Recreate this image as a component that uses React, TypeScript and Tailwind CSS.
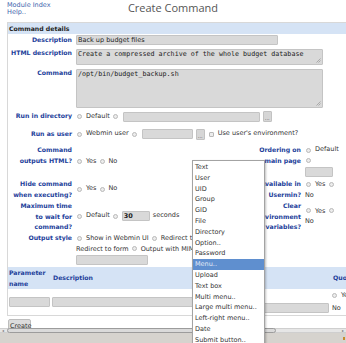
import React from 'react';

function Radio() {
  return <span className="inline-block w-[5px] h-[5px] shrink-0 rounded-full border border-[#b9b9b9] bg-[#ececec] ml-[1px] mr-[4px]" />;
}

function Box({ w, text, bold }: { w: string; text?: string; bold?: boolean }) {
  return (
    <div className={`${w} h-[10px] shrink-0 bg-[#d9d9d9] border border-[#c4c4c4] rounded-[1px] pl-[1px] leading-[8px] text-[#222] ${bold ? 'font-bold' : ''}`}>
      {text}
    </div>
  );
}

function Dots() {
  return (
    <div className="w-[9px] h-[11px] shrink-0 ml-[3px] bg-[#d6d6d6] border border-[#c2c2c2] rounded-[1px] text-[5px] leading-[12px] text-center text-[#444]">
      ...
    </div>
  );
}

function Grip() {
  return (
    <svg className="absolute right-[1px] bottom-[1px]" width="5" height="5" viewBox="0 0 5 5">
      <path d="M4.5 0.5 L0.5 4.5 M4.5 2.5 L2.5 4.5" stroke="#8a8a8a" strokeWidth="0.6" />
    </svg>
  );
}

const label = 'w-[66px] shrink-0 pr-[2px] text-right font-bold text-[6.2px] whitespace-nowrap text-[#22409a] leading-[10.5px]';
const rlabel = 'w-[55px] shrink-0 pr-[4px] text-right font-bold text-[6.2px] whitespace-nowrap text-[#22409a] leading-[10.5px]';

const types = [
  'Text', 'User', 'UID', 'Group', 'GID', 'File', 'Directory', 'Option..', 'Password',
  'Menu..', 'Upload', 'Text box', 'Multi menu..', 'Large multi menu..', 'Left-right menu..',
  'Date', 'Submit button..',
];

export default function App() {
  return (
    <div className="relative w-[346px] h-[343px] overflow-hidden bg-white font-['DejaVu_Sans',sans-serif] text-[6.5px] text-[#333]">
      <div className="h-[328px] overflow-hidden">
        <div className="grid grid-cols-[1fr_auto_1fr] h-[22px]">
          <div className="pl-[7px] pt-[1.5px] leading-[7px] text-[#4063ad]">
            <div>Module Index</div>
            <div>Help..</div>
          </div>
          <div className="font-['Open_Sans',sans-serif] text-[11px] leading-[14px] pt-[1px] text-[#555]">Create Command</div>
          <div />
        </div>

        <div className="ml-[7px] w-[430px] border border-[#d8d8d8]">
          <div className="h-[11px] bg-[#d5e3f5] pl-[1px] font-bold text-[6.2px] leading-[11px] text-[#222]">Command details</div>

          <div className="flex h-[12px]">
            <div className={`${label} pt-[1px]`}>Description</div>
            <div className="pl-[2px] mt-[1px]">
              <Box w="w-[202px]" text="Back up budget files" />
            </div>
          </div>

          <div className="flex h-[21px]">
            <div className={`${label} pt-[2px]`}>HTML description</div>
            <div className="pl-[2px] mt-[3px]">
              <div className="relative w-[247px] h-[16px] bg-[#d9d9d9] border border-[#c4c4c4] rounded-[1px] pl-[1px] font-['DejaVu_Sans_Mono',monospace] text-[6.7px] leading-[8px] text-[#222]">
                Create a compressed archive of the whole budget database
                <Grip />
              </div>
            </div>
          </div>

          <div className="flex h-[43px]">
            <div className={`${label} pt-[1px]`}>Command</div>
            <div className="pl-[2px] mt-[2px]">
              <div className="relative w-[247px] h-[39px] bg-[#d9d9d9] border border-[#c4c4c4] rounded-[1px] pl-[1px] font-['DejaVu_Sans_Mono',monospace] text-[6.7px] leading-[8px] text-[#222]">
                /opt/bin/budget_backup.sh
                <Grip />
              </div>
            </div>
          </div>

          <div className="flex items-center h-[13px]">
            <div className={label}>Run in directory</div>
            <div className="flex items-center pl-[2px]">
              <Radio />
              <span className="mr-[2px]">Default</span>
              <Radio />
              <div className="ml-[1px]"><Box w="w-[137px]" /></div>
              <Dots />
            </div>
          </div>

          <div className="flex items-center h-[22px]">
            <div className={label}>Run as user</div>
            <div className="flex items-center pl-[2px]">
              <Radio />
              <span className="mr-[2px]">Webmin user</span>
              <Radio />
              <div className="ml-[1px]"><Box w="w-[51px]" /></div>
              <Dots />
              <span className="inline-block w-[5px] h-[5px] ml-[4px] mr-[4px] border border-[#b9b9b9] bg-[#ececec] rounded-[1px]" />
              <span>Use user's environment?</span>
            </div>
          </div>

          <div className="flex h-[33px]">
            <div className={label}>Command<br />outputs HTML?</div>
            <div className="w-[176px] flex items-center pl-[2px]">
              <Radio />
              <span className="mr-[2px]">Yes</span>
              <Radio />
              <span>No</span>
            </div>
            <div className={rlabel}>Ordering on<br />main page</div>
            <div className="flex flex-col">
              <div className="flex items-center h-[10.5px]"><Radio /><span>Default</span></div>
              <div className="flex items-center h-[10.5px]"><Radio /></div>
              <div className="mt-[0.5px]"><Box w="w-[28px]" /></div>
            </div>
          </div>

          <div className="flex h-[22px]">
            <div className={`${label} pt-[1px]`}>Hide command<br />when executing?</div>
            <div className="w-[176px] flex items-center pl-[2px]">
              <Radio />
              <span className="mr-[2px]">Yes</span>
              <Radio />
              <span>No</span>
            </div>
            <div className={`${rlabel} pt-[1px]`}>Available in<br />Usermin?</div>
            <div className="flex flex-col pt-[1px] leading-[10.5px]">
              <div className="flex items-center h-[10.5px]"><Radio /><span className="mr-[2px]">Yes</span><Radio /></div>
              <div>No</div>
            </div>
          </div>

          <div className="flex h-[32px]">
            <div className={`${label} pt-[1px]`}>Maximum time<br />to wait for<br />command?</div>
            <div className="w-[176px] flex items-center pl-[2px]">
              <Radio />
              <span className="mr-[2px]">Default</span>
              <Radio />
              <Box w="w-[28px]" text="30" bold />
              <span className="ml-[3px]">seconds</span>
            </div>
            <div className={`${rlabel} pt-[1px]`}>Clear<br />environment<br />variables?</div>
            <div className="flex flex-col justify-center leading-[10.5px]">
              <div className="flex items-center h-[10.5px]"><Radio /><span className="mr-[2px]">Yes</span><Radio /></div>
              <div>No</div>
            </div>
          </div>

          <div className="flex h-[35px]">
            <div className={`${label} pt-[1px]`}>Output style</div>
            <div className="flex flex-col pl-[2px] pt-[1px] leading-[10.5px]">
              <div className="flex items-center h-[10.5px]">
                <Radio />
                <span className="mr-[2px]">Show in Webmin UI</span>
                <Radio />
                <span className="mr-[2px]">Redirect to page</span>
                <Radio />
              </div>
              <div className="flex items-center h-[10.5px]">
                <span className="mr-[2px]">Redirect to form</span>
                <Radio />
                <span>Output with MIME type</span>
              </div>
              <div className="mt-[1px]"><Box w="w-[72px]" /></div>
            </div>
          </div>

          <div className="flex h-[22px] bg-[#d5e3f5] font-bold text-[6.2px] text-[#22409a] leading-[10.5px]">
            <div className="w-[44px] pl-[1px] pt-[1px]">Parameter<br />name</div>
            <div className="w-[148px] pl-[1px] flex items-center">Description</div>
            <div className="w-[131px] flex items-center">Type</div>
            <div className="pl-[2px] flex items-center whitespace-nowrap">Quote parameter?</div>
          </div>

          <div className="flex h-[26px]">
            <div className="w-[44px] pl-[1px] flex items-center"><Box w="w-[41px]" /></div>
            <div className="w-[148px] flex items-center"><Box w="w-[146px]" /></div>
            <div className="w-[131px] flex flex-col justify-end pb-[2px]"><Box w="w-[129px]" /></div>
            <div className="flex flex-col pt-[1px] leading-[10.5px]">
              <div className="flex items-center h-[10.5px]"><Radio /><span>Yes</span></div>
              <div className="mt-[2.5px] pl-[1px]">No</div>
            </div>
          </div>
        </div>

        <div className="ml-[8px] mt-[3px] w-[23px] h-[14px] bg-[#dcdcdc] border border-[#bdbdbd] rounded-t-[2px] pl-[1px] leading-[12px] text-[#333]">
          Create
        </div>
      </div>

      <div className="relative h-[5px] bg-[#e6e6e6] border-y border-[#cfcfcf] flex items-center">
        <span className="ml-[2px] text-[4px] leading-[4px] text-[#777]">◂</span>
        <div className="ml-[3px] w-[269px] h-[5px] rounded-full bg-[#dadada] border border-[#9c9c9c]" />
        <span className="ml-auto mr-[2px] text-[4px] leading-[4px] text-[#777]">▸</span>
      </div>
      <div className="h-[10px] bg-[#d6d3ce] flex justify-end items-center">
        <span className="w-[2px] h-[3px] bg-[#c98a2b] mr-[1px]" />
      </div>

      <div className="absolute left-[192px] top-[160px] w-[73px] bg-white border border-[#a3a3a3] shadow-[1px_1px_2px_rgba(0,0,0,0.25)] pt-[1px] text-[#333]">
        {types.map((t) => (
          <div
            key={t}
            className={`h-[10.8px] leading-[10.8px] pl-[2px] whitespace-nowrap ${t === 'Menu..' ? 'bg-[#5f8fcf] text-[#e2eaf6]' : ''}`}
          >
            {t}
          </div>
        ))}
      </div>
    </div>
  );
}
